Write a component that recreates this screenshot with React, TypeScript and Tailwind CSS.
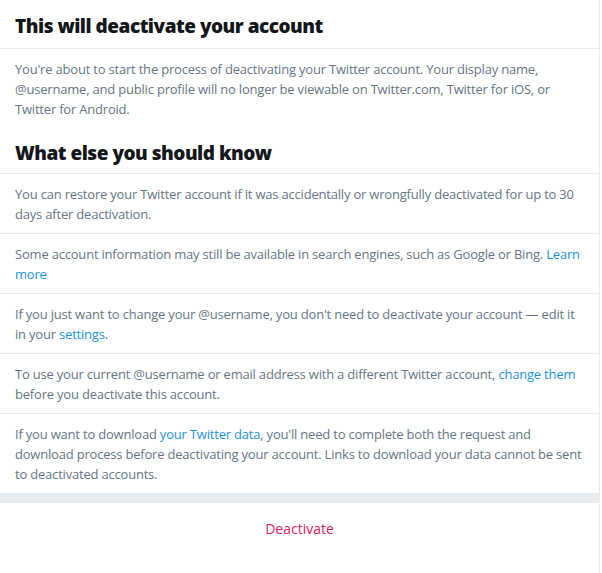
const body = 'font-["Open_Sans","Noto_Sans",sans-serif]';

function Link({ children }: { children: React.ReactNode }) {
  return <a className="text-[#1b95e0] cursor-pointer">{children}</a>;
}

const items: React.ReactNode[] = [
  <>You can restore your Twitter account if it was accidentally or wrongfully deactivated for up to 30 days after deactivation.</>,
  <>
    Some account information may still be available in search engines, such as Google or Bing. <Link>Learn more</Link>
  </>,
  <>
    If you just want to change your @username, you don't need to deactivate your account — edit it in your <Link>settings</Link>.
  </>,
  <>
    To use your current @username or email address with a different Twitter account, <Link>change them</Link> before you deactivate this account.
  </>,
  <>
    If you want to download <Link>your Twitter data</Link>, you'll need to complete both the request and download process before deactivating your account. Links to download your data cannot be sent to deactivated accounts.
  </>,
];

export default function App() {
  return (
    <div className="min-h-[573px] bg-white">
      <div className={`w-[600px] min-h-[573px] border-r border-[#e6ecf0] ${body}`}>
        <h2 className="px-[15px] pt-[12px] pb-[8px] border-b border-[#e6ecf0] text-[19px] leading-7 font-extrabold tracking-[-0.5px] text-[#14171a]">
          This will deactivate your account
        </h2>
        <p className="px-[15px] py-[10px] text-[13px] leading-5 tracking-[-0.2px] text-[#657786]">
          You're about to start the process of deactivating your Twitter account. Your display name, @username, and public profile will no longer be viewable on Twitter.com, Twitter for iOS, or Twitter for Android.
        </p>
        <h2 className="px-[15px] pt-[10px] pb-[6px] border-b border-[#e6ecf0] text-[19px] leading-7 font-extrabold tracking-[-0.5px] text-[#14171a]">
          What else you should know
        </h2>
        {items.map((item, i) => (
          <p
            key={i}
            className={`px-[15px] pt-[10px] pb-[9px] text-[13px] leading-5 tracking-[-0.2px] text-[#657786] ${
              i < items.length - 1 ? 'border-b border-[#e6ecf0]' : ''
            }`}
          >
            {item}
          </p>
        ))}
        <div className="h-[10px] bg-[#e6ecf0]" />
        <button className="w-full pt-[16px] pb-[16px] text-center text-[14px] leading-5 text-[#e0245e]">
          Deactivate
        </button>
      </div>
    </div>
  );
}
